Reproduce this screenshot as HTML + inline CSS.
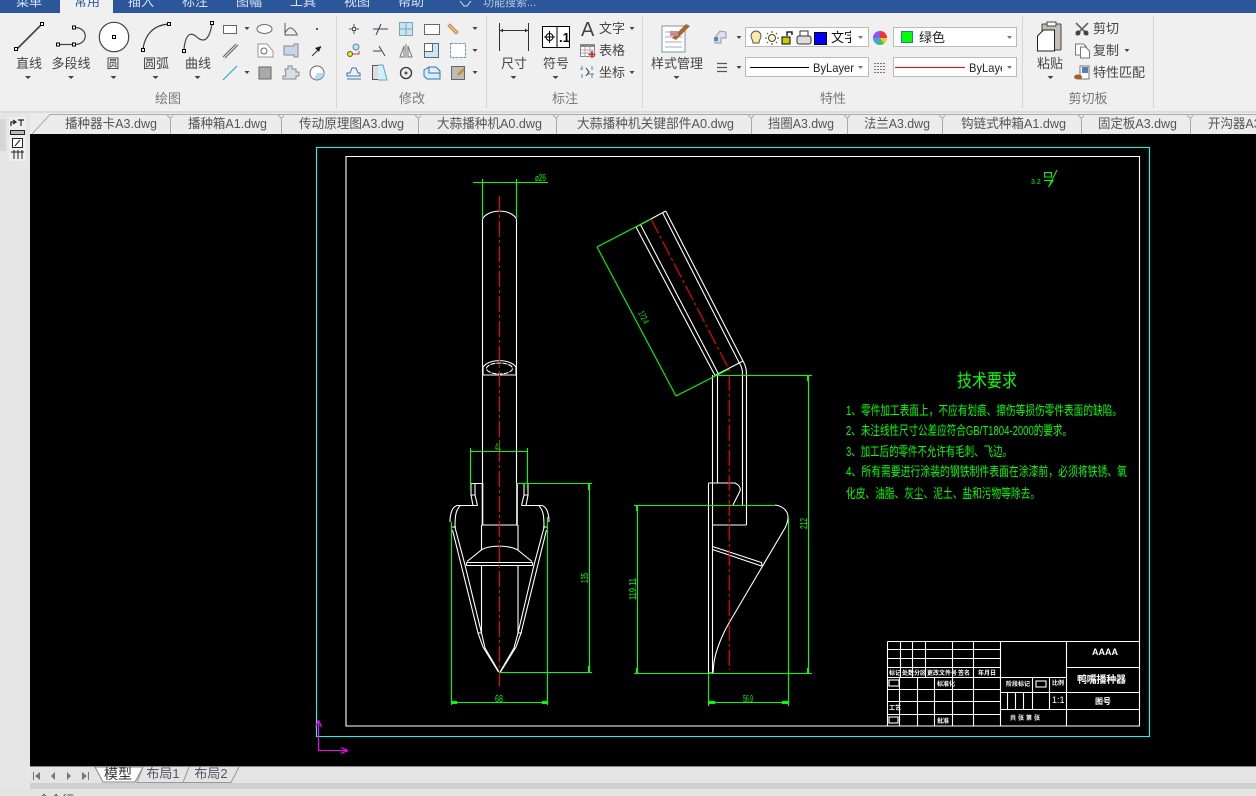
<!DOCTYPE html>
<html lang="zh"><head><meta charset="utf-8"><title>CAD</title>
<style>
html,body{margin:0;padding:0;width:1256px;height:796px;overflow:hidden;background:#e4e4e4}
svg{display:block;position:absolute;left:0;top:0}
text{font-family:"Liberation Sans","Noto Sans CJK SC",sans-serif}
.l{font-size:13px;fill:#444;text-anchor:middle}
.g{font-size:13px;fill:#777;text-anchor:middle}
.t{font-size:13px;fill:#555}
.m{font-size:13px;fill:#d8e3f3;text-anchor:middle}
.w{fill:none;stroke:#fff;stroke-width:1.1}
.gr{fill:none;stroke:#0f0;stroke-width:1.1}
.r{fill:none;stroke:#f00;stroke-width:1.1;stroke-dasharray:16 3 3 3}
.c{fill:#444}
.i{fill:none;stroke:#555;stroke-width:1}
.dt{font-size:10px;fill:#0f0}
.tx{font-size:13px;fill:#0f0}
.tb{font-size:6px;fill:#fff;font-weight:bold}
</style></head><body>
<svg width="1256" height="796" viewBox="0 0 1256 796" xmlns="http://www.w3.org/2000/svg">
<defs><clipPath id="cl1"><rect x="745" y="27" width="106" height="20"/></clipPath><clipPath id="cl2"><rect x="893" y="57" width="110" height="20"/></clipPath><clipPath id="cl3"><rect x="0" y="0" width="1256" height="13"/></clipPath></defs>
<!-- title bar -->
<rect width="1256" height="13" fill="#2b579a"/>
<rect x="60" y="0" width="53" height="14" fill="#f0f0f0"/>
<g clip-path="url(#cl3)">
<text x="29" y="6" class="m">菜单</text>
<text x="87" y="6" class="l" style="fill:#2b579a">常用</text>
<text x="141" y="6" class="m">插入</text>
<text x="195" y="6" class="m">标注</text>
<text x="249" y="6" class="m">图幅</text>
<text x="303" y="6" class="m">工具</text>
<text x="357" y="6" class="m">视图</text>
<text x="411" y="6" class="m">帮助</text>
<path d="M460 1l4 5h3l4-5" fill="none" stroke="#d8e3f3"/>
<text x="483" y="6" style="font-size:11px;fill:#b9c9e2">功能搜索...</text>
</g>
<!-- ribbon -->
<rect y="13" width="1256" height="98" fill="#f0f0f0"/>
<rect y="111" width="1256" height="2" fill="#dcdcdc"/>
<path d="M336.500 16V108M486.500 16V108M642.500 16V108M1022.500 16V108M1153.500 16V108" stroke="#d5d5d5"/>
<!-- big draw icons -->
<path d="M16 50L42 24" stroke="#444" stroke-width="1.600"/>
<rect x="14.500" y="47.500" width="3" height="3" fill="#fff" stroke="#000"/><rect x="40.500" y="22.500" width="3" height="3" fill="#fff" stroke="#000"/>
<path d="M58 44.500H74M74 27.500C89 27 89 45 74 44.500" fill="none" stroke="#444" stroke-width="1.200"/>
<rect x="72.500" y="26" width="3" height="3" fill="#fff" stroke="#000"/><rect x="56.500" y="43" width="3" height="3" fill="#fff" stroke="#000"/><rect x="72.500" y="43" width="3" height="3" fill="#fff" stroke="#000"/>
<circle cx="114" cy="37" r="14.700" fill="#fff" stroke="#444" stroke-width="1.200"/><rect x="112.500" y="35.500" width="3" height="3" fill="#fff" stroke="#000"/>
<path d="M143 49C145 34 154 25 169 24" fill="none" stroke="#333" stroke-width="1.200"/><rect x="141.500" y="48.500" width="3" height="3" fill="#fff" stroke="#000"/><rect x="167.500" y="22.500" width="3" height="3" fill="#fff" stroke="#000"/>
<path d="M184 49C186 30 193 33 198 38C206 44 210 36 212 24" fill="none" stroke="#444" stroke-width="1.200"/><rect x="182.500" y="49.500" width="3" height="3" fill="#fff" stroke="#000"/><rect x="210.500" y="21.500" width="3" height="3" fill="#fff" stroke="#000"/>
<text x="29" y="68" class="l">直线</text><text x="71" y="68" class="l">多段线</text><text x="113" y="68" class="l">圆</text><text x="156" y="68" class="l">圆弧</text><text x="198" y="68" class="l">曲线</text>
<path class="c" d="M25 76h6l-3 3zM68 76h6l-3 3zM110.500 76h6l-3 3zM152.500 76h6l-3 3zM194.500 76h6l-3 3zM244.500 27h5l-2.500 3zM244.500 71h5l-2.500 3zM472.500 27h5l-2.500 3zM472.500 49h5l-2.500 3zM472.500 71h5l-2.500 3zM510.500 76h6l-3 3zM552.500 76h6l-3 3zM629.500 27h5l-2.500 3zM629.500 71h5l-2.500 3zM673.500 76h6l-3 3zM736.500 36h5l-2.500 3zM736.500 66h5l-2.500 3zM1047.500 76h6l-3 3zM1124.500 49h5l-2.500 3z"/>
<!-- small draw icons -->
<rect x="223.500" y="25.500" width="13" height="8" fill="#fff" stroke="#666"/>
<ellipse cx="264.500" cy="29" rx="7.500" ry="4.500" fill="#fff" stroke="#666"/>
<path class="i" d="M285 23V35H298M285 33C289 26 292 26 297 34"/>
<rect x="316" y="28" width="2" height="2" fill="#555"/>
<path d="M223 57L236 44M225 58L238 45" stroke="#666" stroke-width="1.200"/>
<path d="M258 44h9l6 7v6h-15z" fill="#fff" stroke="#999"/><circle cx="264" cy="51" r="3" fill="none" stroke="#666"/>
<path d="M284 46h10v-2h4v13h-4v-2h-10z" fill="#c6d7ea" stroke="#888"/>
<path d="M312 56L321 47" stroke="#333"/><path d="M315 48l6-2-2 6z" fill="#222"/>
<path d="M223 80L237 66" stroke="#33a5dd" stroke-width="1.200"/>
<rect x="259" y="67" width="12" height="12" fill="#aaa" stroke="#666"/>
<path d="M285 72h3v-3h4v3h4v3h3v4h-3v3h-13v-3h3z" fill="#d8dee8" stroke="#888" transform="translate(0 -3)"/>
<circle cx="317" cy="73" r="7" fill="#fff" stroke="#666"/><path d="M317 73h7a7 7 0 0 1-10 6z" fill="#b5dcf2"/>
<text x="168" y="103" class="g">绘图</text>
<!-- modify icons -->
<g fill="none" stroke="#555">
<path d="M354 24V34M349 29H359"/><rect x="352.500" y="27.500" width="3" height="3" fill="#fff"/>
<path d="M373 29H388M381 24L376 35" stroke="#345"/>
<rect x="399.500" y="22.500" width="13" height="13" fill="#c8e4f8" stroke="#7aa"/><path d="M406 23V35M400 29H412" stroke="#7aa"/>
<rect x="424.500" y="24.500" width="15" height="10" fill="#fff" stroke="#666"/>
<path d="M450 24l8 8-2 2-8-8z" fill="#f0c050" stroke="#b87"/>
<circle cx="356" cy="47" r="3" fill="#cde" stroke="#58a"/><circle cx="350" cy="54" r="2.500" fill="#ee0" stroke="#555"/><path d="M353 54h6v-3" stroke="#a44"/>
<path d="M373 51h8M379 46l6 10" stroke="#345"/>
<path d="M406 44V58M404 46l-4 11h4zM408 46l4 11h-4z" stroke="#777"/>
<rect x="424.500" y="43.500" width="14" height="14" fill="#c8e8fa" stroke="#666"/><rect x="424.500" y="43.500" width="8" height="8" fill="#fff" stroke="#666"/>
<rect x="450.500" y="43.500" width="15" height="14" fill="#fff" stroke="#69a" stroke-dasharray="3 1"/>
<path d="M347 76v-3h3l2-5h4l2 5h2v3zM347 79h14" stroke="#37a"/>
<rect x="372.500" y="65.500" width="6" height="14" fill="#ddd" stroke="#555"/><path d="M378 65h5l4 15h-9" stroke="#5ab" fill="#d5eefc"/>
<circle cx="406" cy="73" r="5.500" stroke="#333" stroke-width="1.300"/><circle cx="406" cy="73" r="1" fill="#333"/>
<path d="M424 70l5-3h7l4 4v8h-13l-3-3zM429 67v6h11M424 70v6" stroke="#37a" fill="#d5eefc"/>
<rect x="451.500" y="66.500" width="13" height="13" fill="#bbb" stroke="#666"/><path d="M458 75l6-6" stroke="#c80" stroke-width="2"/>
</g>
<text x="412" y="103" class="g">修改</text>
<!-- annotate -->
<path d="M499.500 23V51M528.500 23V51M500 30.500H528" stroke="#333" fill="none"/><path d="M500 30.500l3-2v4zM528 30.500l-3-2v4z" fill="#333"/>
<rect x="542.500" y="26.500" width="27" height="21" fill="#fff" stroke="#000"/><path d="M557 26V48" stroke="#000"/>
<circle cx="549.500" cy="37" r="3.500" fill="none" stroke="#000"/><path d="M544 37h11M549.500 31v12" stroke="#000"/>
<text x="559" y="42" style="font-size:13px;font-weight:bold;fill:#000">.1</text>
<text x="514" y="68" class="l">尺寸</text><text x="556" y="68" class="l">符号</text>
<text x="581" y="36" style="font-size:20px;fill:#444">A</text>
<text x="599" y="33" class="t" style="fill:#444">文字</text><text x="599" y="55" class="t" style="fill:#444">表格</text><text x="599" y="77" class="t" style="fill:#444">坐标</text>
<rect x="580.500" y="44.500" width="14" height="12" fill="#fff" stroke="#888"/><rect x="580" y="44" width="15" height="3" fill="#888"/><path d="M585 47v10M590 47v10M581 50h14M581 53h14" stroke="#aaa"/><path d="M592 51v7M588.500 54.500h7" stroke="#d22" stroke-width="1.600"/>
<path d="M582 66v3M582 74v4M592 66v4M592 74v4M580 69h3M588 74h6" stroke="#58a"/><path d="M586 68l3 4-3 4" stroke="#333" fill="none"/>
<text x="565" y="103" class="g">标注</text>
<!-- style -->
<path d="M662 26h23v26h-23z" fill="#fff" stroke="#79a"/><path d="M665 32h17M665 37h17M665 42h17M665 47h17" stroke="#aab"/>
<path d="M672 38l14-14 4 2-14 14z" fill="#a5682a"/><rect x="670" y="31" width="8" height="5" fill="#c89"/>
<text x="677" y="68" class="l">样式管理</text>
<!-- properties -->
<path d="M716 36l4-5 6 1v6h-5v5h-6z" fill="#dde" stroke="#999"/><rect x="714" y="37" width="4" height="4" fill="#58b"/>
<path d="M717 63.500h10M717 67.500h10M717 71.500h10" stroke="#555" stroke-width="1.200"/>
<rect x="745.500" y="27.500" width="123" height="19" fill="#fff" stroke="#bbb"/>
<path d="M751 36a5 5 0 1 1 10 0c0 3-2 3-2 7h-6c0-4-2-4-2-7z" fill="#fbe9a8" stroke="#555"/>
<circle cx="772" cy="38" r="3.500" fill="#fff7c0" stroke="#444"/><path d="M772 31v2M772 43v2M765 38h2M777 38h2M767 33l1 1M776 42l1 1M767 43l1-1M776 34l1-1" stroke="#444"/>
<rect x="782" y="37" width="8" height="7" fill="#cc0" stroke="#000"/><path d="M787 36v-4h5v3" stroke="#000" fill="none" stroke-width="1.300"/>
<rect x="797" y="36" width="14" height="8" rx="2" fill="#ddd" stroke="#333"/><rect x="800" y="31" width="8" height="5" fill="#fff" stroke="#333"/>
<rect x="814.500" y="32.500" width="12" height="12" fill="#00f" stroke="#000"/>
<g clip-path="url(#cl1)"><text x="831" y="42" style="font-size:13px;fill:#111">文字</text></g>
<path d="M858 36h5l-2.500 3z" fill="#777"/>
<circle cx="880" cy="38" r="7" fill="#f6c02e"/><path d="M880 38L880 31A7 7 0 0 1 887 38z" fill="#e33"/><path d="M880 38L873 38A7 7 0 0 1 880 31z" fill="#85f"/><path d="M880 38L873 38A7 7 0 0 0 880 45z" fill="#4ac"/><path d="M880 38L880 45A7 7 0 0 0 884 43.500z" fill="#3c5"/>
<rect x="893.500" y="27.500" width="123" height="19" fill="#fff" stroke="#bbb"/>
<rect x="901.500" y="31.500" width="11" height="11" fill="#0f0" stroke="#27c"/>
<text x="919" y="42" style="font-size:13px;fill:#222">绿色</text><path d="M1007 36h5l-2.500 3z" fill="#777"/>
<rect x="745.500" y="57.500" width="123" height="19" fill="#fff" stroke="#bbb"/>
<path d="M750 67.500H809" stroke="#000"/><text x="813" y="72" textLength="41" lengthAdjust="spacingAndGlyphs" style="font-size:12px;fill:#222">ByLayer</text><path d="M858 66h5l-2.500 3z" fill="#777"/>
<path d="M874 63.500h12M874 66.500h12M874 69.500h12M874 72.500h12" stroke="#777" stroke-dasharray="2 1"/>
<rect x="893.500" y="57.500" width="123" height="19" fill="#fff" stroke="#bbb"/>
<rect x="895" y="67" width="70" height="1" style="fill:#f00"/><g clip-path="url(#cl2)"><text x="969" y="72" textLength="41" lengthAdjust="spacingAndGlyphs" style="font-size:12px;fill:#222">ByLayer</text></g>
<rect x="1002" y="58" width="14" height="18" fill="#fff"/><path d="M1007 66h5l-2.500 3z" fill="#777"/>
<text x="833" y="103" class="g">特性</text>
<!-- clipboard -->
<rect x="1042" y="24" width="19" height="26" rx="1" fill="#c5bfb4" stroke="#444"/><rect x="1047" y="22" width="9" height="4" fill="#fff" stroke="#444"/>
<path d="M1037.500 36l6-6h11v21h-17z" fill="#fff" stroke="#222"/>
<text x="1050" y="68" class="l">粘贴</text>
<path d="M1076 23l12 12M1088 23l-12 12" stroke="#666" stroke-width="1.600"/><circle cx="1078" cy="33" r="2.500" fill="#444"/><circle cx="1086" cy="33" r="2.500" fill="#444"/>
<path d="M1075.500 44h8l3 3v8h-11z" fill="#fff" stroke="#777"/><path d="M1080.500 47h5l4 4v7h-9z" fill="#fff" stroke="#777"/>
<rect x="1080" y="66" width="9" height="13" fill="#fff" stroke="#777"/><rect x="1082" y="67" width="6" height="6" fill="#5580b0"/><ellipse cx="1078" cy="77" rx="4" ry="2.500" fill="#a5602a"/>
<text x="1093" y="33" class="t" style="fill:#444">剪切</text><text x="1093" y="55" class="t" style="fill:#444">复制</text><text x="1093" y="77" class="t" style="fill:#444">特性匹配</text>
<text x="1088" y="103" class="g">剪切板</text>
<!-- file tabs -->
<rect y="113" width="1256" height="21" fill="#ececec"/>
<path d="M32 134L50 114.500H1256" fill="none" stroke="#aaa"/>
<path d="M170.500 134V118L173 115.500M170 118L167 115M281.500 134V118L284 115.500M281 118L278 115M418.500 134V118L421 115.500M418 118L415 115M556.500 134V118L559 115.500M556 118L553 115M751.500 134V118L754 115.500M751 118L748 115M847.500 134V118L850 115.500M847 118L844 115M942.500 134V118L945 115.500M942 118L939 115M1081.500 134V118L1084 115.500M1081 118L1078 115M1190.500 134V118L1193 115.500M1190 118L1187 115" fill="none" stroke="#aaa"/>
<text x="65" y="128" class="t" textLength="92" lengthAdjust="spacingAndGlyphs">播种器卡A3.dwg</text>
<text x="188" y="128" class="t" textLength="79" lengthAdjust="spacingAndGlyphs">播种箱A1.dwg</text>
<text x="299" y="128" class="t" textLength="105" lengthAdjust="spacingAndGlyphs">传动原理图A3.dwg</text>
<text x="437" y="128" class="t" textLength="105" lengthAdjust="spacingAndGlyphs">大蒜播种机A0.dwg</text>
<text x="577" y="128" class="t" textLength="157" lengthAdjust="spacingAndGlyphs">大蒜播种机关键部件A0.dwg</text>
<text x="768" y="128" class="t" textLength="66" lengthAdjust="spacingAndGlyphs">挡圈A3.dwg</text>
<text x="864" y="128" class="t" textLength="66" lengthAdjust="spacingAndGlyphs">法兰A3.dwg</text>
<text x="961" y="128" class="t" textLength="105" lengthAdjust="spacingAndGlyphs">钩链式种箱A1.dwg</text>
<text x="1098" y="128" class="t" textLength="79" lengthAdjust="spacingAndGlyphs">固定板A3.dwg</text>
<text x="1208" y="128" class="t" textLength="79" lengthAdjust="spacingAndGlyphs">开沟器A3.dwg</text>
<!-- side panel -->
<rect x="0" y="113" width="30" height="683" fill="#e6e6e6"/>
<rect x="0" y="119" width="6" height="32" fill="#d6d6d6"/>
<rect x="9" y="117" width="17" height="44" fill="#efefef"/>
<path d="M11 126v-4h4M13 120l3 2-3 2M18 120h6M21 120v6" fill="none" stroke="#222" stroke-width="1.200"/>
<rect x="10.500" y="130.500" width="14" height="4" fill="#bbb" stroke="#222"/>
<rect x="12.500" y="138.500" width="10" height="9" fill="#fff" stroke="#222"/><path d="M15 146l5-6" stroke="#222"/>
<path d="M11 152h13M14 150v9M18 150v9M22 150v9" stroke="#222" fill="none"/>
<!-- canvas -->
<rect x="30" y="134" width="1226" height="633" fill="#000"/>
<path d="M316.500 147.500H1149.500V736.500H316.500Z" fill="none" stroke="#0ff" stroke-width="1.100"/>
<path d="M346 156.500H1139.500V726H346Z" fill="none" stroke="#fff" stroke-width="1.100"/>
<!-- UCS -->
<path d="M318.500 722V750.500H348M318.500 720l-3 7M318.500 720l3 7M348 750.500l-7-3M348 750.500l-7 3" fill="none" stroke="#f0f" stroke-width="1.100"/>
<!-- roughness -->
<g fill="none" stroke="#0f0"><rect x="1044.500" y="172.500" width="7" height="4.500"/><path d="M1044 180.500H1053L1048.500 187L1057 170"/></g>
<text x="1031" y="184" style="font-size:7px;fill:#0f0">3.2</text>
<!-- left view -->
<g class="w">
<path d="M482.500 219C488 208.500 511 208.500 516.500 219"/>
<path d="M482.500 219V483M516.500 219V483"/>
<path d="M483 367C489 358.500 510 358.500 516 367V375M483 367V375M483 375H516.500"/>
<ellipse cx="499.500" cy="368.500" rx="13" ry="5.500" stroke-dasharray="5 1"/>
<path d="M482.500 483V525M517 483V525" stroke-width="1.600"/>
<path d="M482 525H517.500M481.500 525V550M518 525V550"/>
<path d="M467 561.500L482 549.500C490 545 508 545 517 549.500L532 561.500"/>
<path d="M466.500 562.500H532.500M466.500 565.500H532.500M466.500 562.500V565.500M532.500 562.500V565.500"/>
<path d="M481.500 565.500V633M518 565.500V633"/>
<path d="M477.500 505.500H457C452 507 450 514 450 522M460 506C456 510 455 515 455 527M451.500 527H456"/>
<path d="M452.500 530L478 633L483 647L498.500 672"/>
<path d="M455 527.500L465 565L481.500 633L485 648L499 672"/>
<path d="M521.500 505.500H542C547 507 549 514 549 522M539 506C543 510 544 515 544 527M543 527H548"/>
<path d="M546.500 530L521 633L516 647L500.500 672"/>
<path d="M544 527.500L534 565L518 633L514 648L500 672"/>
<path d="M478 633H482M518 633H522"/>
<path d="M482 483.500H471V495L473 505.500M475 483.500V495L477.500 505.500M471 495H475"/>
<path d="M517 483.500H528V495L526 505.500M524 483.500V495L521.500 505.500M524 495H528"/>
</g>
<path class="r" d="M499.500 196V686"/>
<g class="gr">
<path d="M473 182.500H548M482.500 179V219M516.500 179V219"/>
<path d="M470.500 448V490M527.500 448V490M470.500 451.500H527.500"/>
<path d="M517 483.500H592M499 672.500H592M589.500 483V672"/>
<path d="M451.500 522V705M547.500 517V705M451.500 702.500H547.500"/>
</g>
<path d="M452 701h5v3h-5zM542 701h5v3h-5zM588 484h2v6h-2zM588 666h2v6h-2z" fill="#0f0"/>
<text x="535" y="181" class="dt" textLength="11" lengthAdjust="spacingAndGlyphs">⌀26</text>
<text x="495" y="450" class="dt" textLength="6" lengthAdjust="spacingAndGlyphs">41</text>
<text x="495" y="702" class="dt" textLength="8" lengthAdjust="spacingAndGlyphs">68</text>
<text transform="translate(588 583) rotate(-90)" class="dt" textLength="10" lengthAdjust="spacingAndGlyphs">135</text>
<!-- right view -->
<g class="w">
<path d="M636 227L665.700 211M636 227L715 375.500M640.700 225L719 375M662.700 213L739.300 363C742 367 742.500 370 742.500 375M665.700 211L743 361C746 366 746.500 370 746.500 377"/>
<path d="M715 375.500L743 361"/>
<path d="M712.500 375V673M717.500 375V483M742.500 375V505M746.500 375V525"/>
<path d="M708.500 483V673M708.500 483H735C739 485 741 488 740 491L733 505M712.500 525H746.500"/>
<path d="M775 505C783 506 788 511 788 517C788 522 786 526 785 528L729 623C722 635 716 650 714 662L713 673H708.500"/>
<path d="M712.500 546.500L761.500 562.500M712.500 549.500L761.500 566M761.500 562.500L762 566"/>
</g>
<path class="r" d="M651 219L729.300 370V670"/>
<g class="gr">
<path d="M597 247L651 219M597 247L676 396M676 396L729 369"/>
<path d="M716 375.500H812M808.500 375V673M634 673.500H812M637.500 505V673M634 505.500H775"/>
<path d="M708.500 673V706M788.500 517V706M708.500 702.500H788.500"/>
</g>
<path d="M709 701h6v3h-6zM782 701h6v3h-6zM807 376h2v5h-2zM807 668h2v5h-2zM636 506h2v5h-2zM636 668h2v5h-2z" fill="#0f0"/>
<text transform="translate(638 313) rotate(62)" class="dt" textLength="13" lengthAdjust="spacingAndGlyphs" style="font-size:9px">172.4</text>
<text x="743" y="702" class="dt" textLength="10" lengthAdjust="spacingAndGlyphs">56.9</text>
<text transform="translate(807 529) rotate(-90)" class="dt" textLength="11" lengthAdjust="spacingAndGlyphs">212</text>
<text transform="translate(636 600) rotate(-90)" class="dt" textLength="22" lengthAdjust="spacingAndGlyphs">119.11</text>
<!-- text -->
<text x="957" y="387" textLength="60" lengthAdjust="spacingAndGlyphs" style="font-size:18px;fill:#0f0">技术要求</text>
<text x="846" y="415" textLength="276" lengthAdjust="spacingAndGlyphs" class="tx">1、零件加工表面上，不应有划痕、擦伤等损伤零件表面的缺陷。</text>
<text x="846" y="435" textLength="226" lengthAdjust="spacingAndGlyphs" class="tx">2、未注线性尺寸公差应符合GB/T1804-2000的要求。</text>
<text x="846" y="456" textLength="166" lengthAdjust="spacingAndGlyphs" class="tx">3、加工后的零件不允许有毛刺、飞边。</text>
<text x="846" y="476" textLength="281" lengthAdjust="spacingAndGlyphs" class="tx">4、所有需要进行涂装的钢铁制件表面在涂漆前，必须将铁锈、氧</text>
<text x="846" y="498" textLength="194" lengthAdjust="spacingAndGlyphs" class="tx">化皮、油脂、灰尘、泥土、盐和污物等除去。</text>
<!-- title block -->
<g class="w">
<path d="M887.500 641.500H1139.500M887.500 641.500V726M887.500 649.500H1000.500M887.500 658.500H1000.500M887.500 667.500H1000.500M887.500 677.500H1066.500M887.500 689.500H1000.500M887.500 701.500H1000.500M887.500 714.500H1000.500"/>
<path d="M900.500 641V677M912.500 641V677M925.500 641V677M952.500 641V726M973.500 641V726M1000.500 641V726"/>
<path d="M899.500 677V726M917.500 677V726M934.500 677V726"/>
<path d="M1066.500 641V726M1066.500 667.500H1139.500M1000.500 692.500H1139.500M1000.500 709.500H1139.500"/>
<path d="M1032.500 677V709M1049.500 677V709M1007.500 692V709M1015.500 692V709M1023.500 692V709"/>
<rect x="889" y="680" width="10" height="6"/><rect x="889" y="717" width="9" height="6"/><rect x="1036" y="681" width="10" height="6"/>
</g>
<g class="tb">
<text x="889" y="675">标记</text><text x="902" y="675">处数</text><text x="914" y="675">分区</text><text x="927" y="675">更改文件号</text><text x="958" y="675">签名</text><text x="978" y="675">年月日</text>
<text x="937" y="686">标准化</text><text x="889" y="710">工艺</text><text x="937" y="723">批准</text>
<text x="1006" y="686">阶段标记</text><text x="1052" y="685">比例</text><text x="1010" y="720" textLength="30">共张第张</text>
<text x="1052" y="703" style="font-size:9px;font-weight:normal">1:1</text>
<text x="1092" y="655" style="font-size:9px">AAAA</text>
<text x="1077" y="683" textLength="49" style="font-size:10px">鸭嘴播种器</text>
<text x="1095" y="704" style="font-size:8px">图号</text>
</g>
<!-- bottom -->
<rect x="30" y="767" width="1226" height="16" fill="#e4e4e4"/>
<rect x="30" y="766" width="1226" height="1" fill="#888"/>
<path class="c" d="M33 772h1v8h-1zM40 772v8l-5-4zM55 772v8l-4-4zM67 772l4 4-4 4zM82 772l5 4-5 4zM88 772h1v8h-1z" style="fill:#777"/>
<path d="M95 767L103 782H135L143 767z" fill="#fff" stroke="#888"/>
<path d="M143 767L137 782.500H183L189 767M189 767L183 782.500H231L239 767" fill="none" stroke="#999"/>
<text x="118" y="779" style="font-size:14px;text-anchor:middle;fill:#333">模型</text>
<text x="163" y="778" style="font-size:13px;text-anchor:middle;fill:#556">布局1</text>
<text x="211" y="778" style="font-size:13px;text-anchor:middle;fill:#556">布局2</text>
<rect x="30" y="783" width="1226" height="6" fill="#cfcfcf"/>
<rect y="789" x="0" width="1256" height="7" fill="#e4e4e4"/>
<text x="38" y="804" style="font-size:12px;fill:#444">命令行</text>
</svg>
</body></html>
